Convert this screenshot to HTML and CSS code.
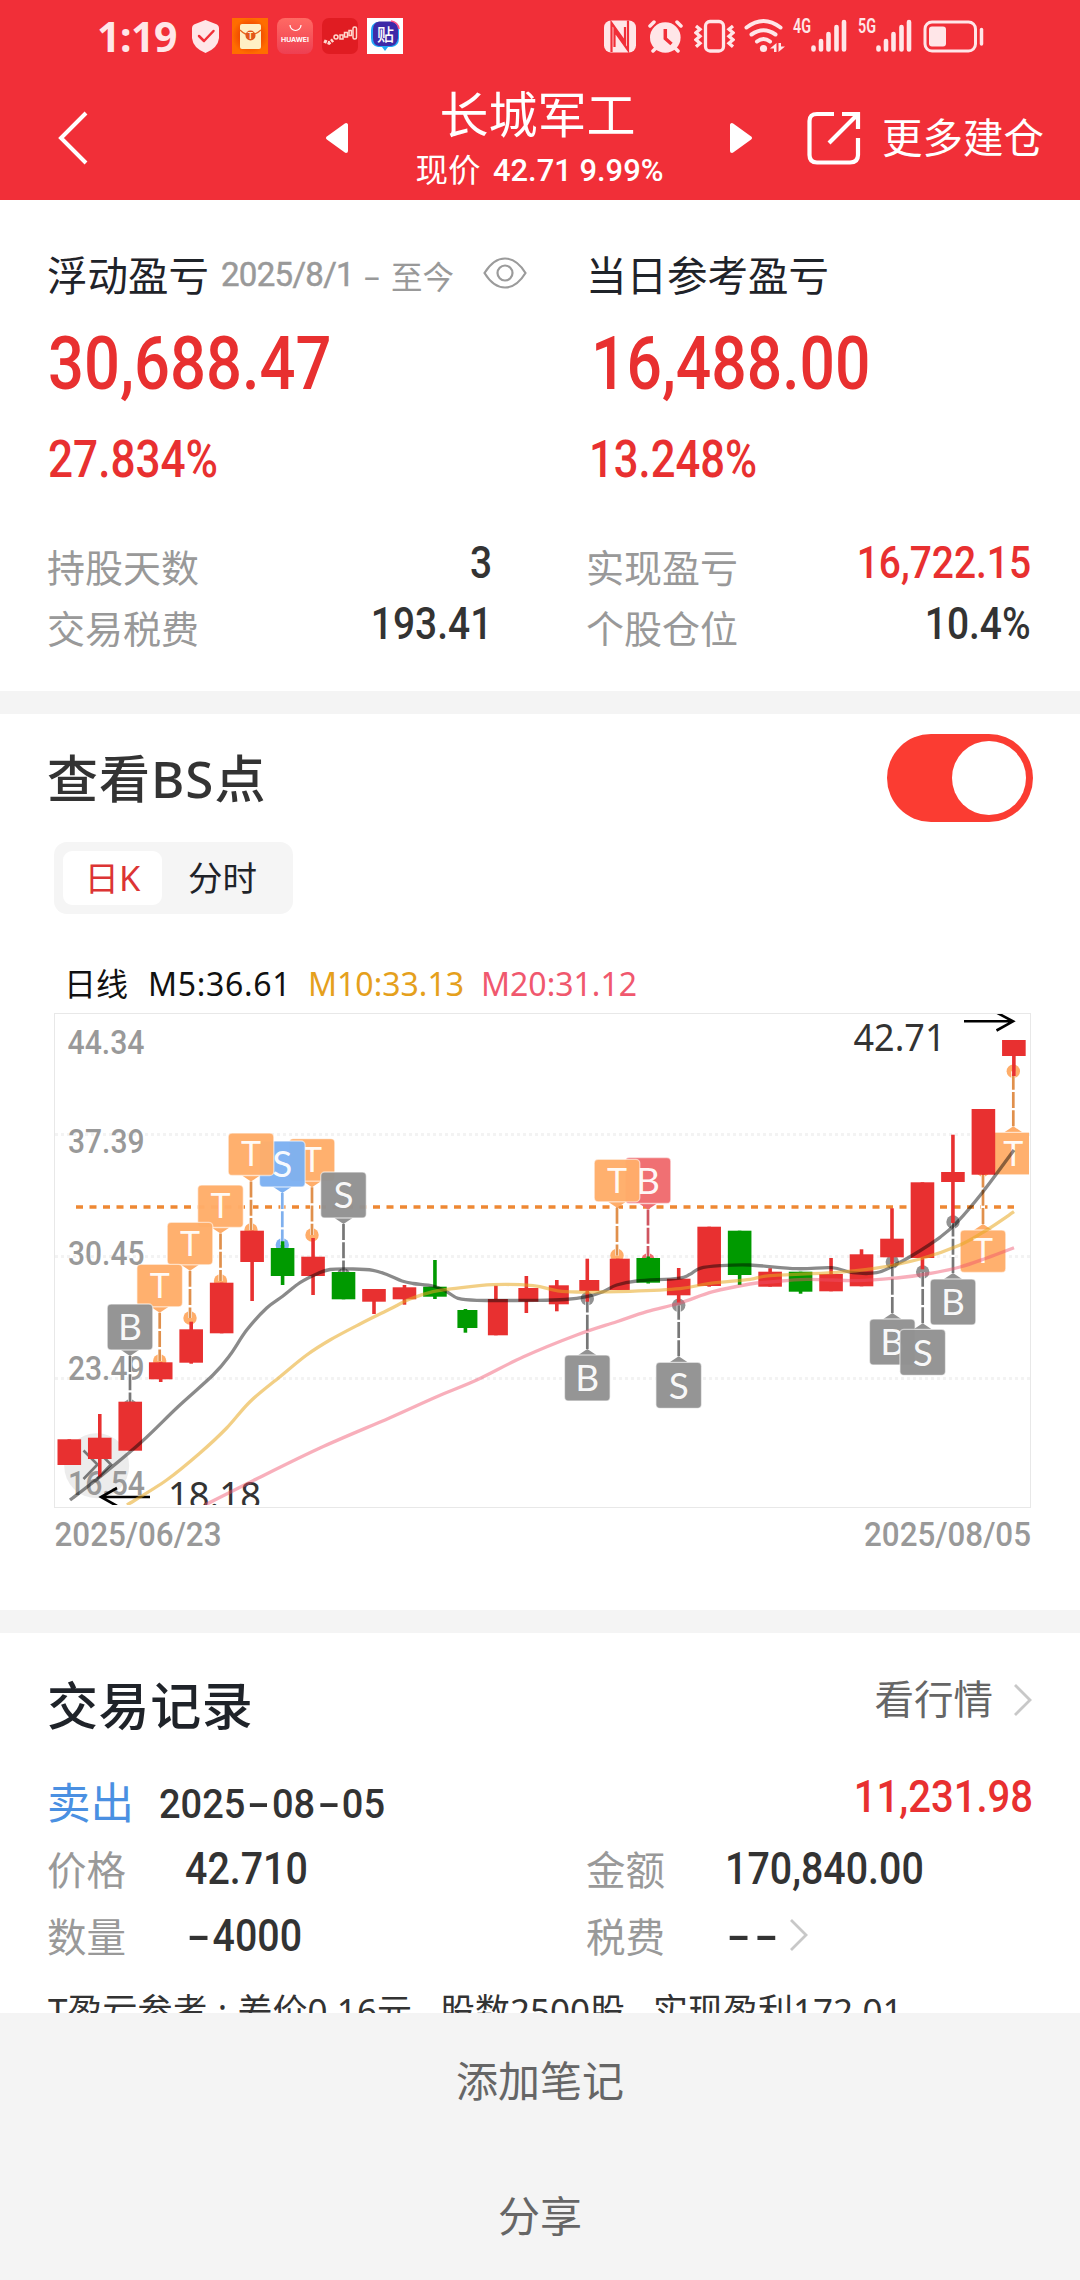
FILE: index.html
```html
<!DOCTYPE html>
<html lang="zh-CN">
<head>
<meta charset="utf-8">
<title>长城军工</title>
<link rel="stylesheet" href="styles.css">
</head>
<body>
<div class="app">
  <header class="top">
    <div class="status">
      <div class="status-left">
        <span class="clock">1:19</span>
        <svg class="i-shield" viewBox="192 19 27 35"><path fill="#ffe6e8" d="M205.500 20 L217 24.500 Q219 25.500 219 28 V38 Q218 48 205.500 53 Q193 48 192 38 V28 Q192 25.500 194 24.500Z"/><path fill="none" stroke="#f12f38" stroke-width="2.500" stroke-linecap="round" stroke-linejoin="round" d="M199 36 L204 41 L213.500 31"/></svg>
        <svg class="i-app" viewBox="0 0 36 36"><defs><radialGradient id="og"><stop offset=".55" stop-color="#f04a00"/><stop offset="1" stop-color="#ff6d00"/></radialGradient></defs><rect width="36" height="36" fill="url(#og)"/><rect x="8" y="6" width="21" height="25" rx="2" fill="#fff0c4"/><path d="M8 12 Q18 22 29 12" fill="none" stroke="#e8641e" stroke-width="1.200"/><circle cx="18.500" cy="17.500" r="5" fill="#e2571a"/><text x="18.500" y="20.500" text-anchor="middle" class="coin">T</text></svg>
        <svg class="i-app" viewBox="0 0 36 36"><defs><linearGradient id="hg" x2="0" y2="1"><stop stop-color="#ff6a64"/><stop offset="1" stop-color="#ee3f52"/></linearGradient></defs><rect width="36" height="36" rx="8" fill="url(#hg)"/><path d="M13 7 A5.500 5.500 0 0 0 24 7" fill="none" stroke="#fff" stroke-width="1.200"/><text x="18" y="23.500" text-anchor="middle" textLength="28" lengthAdjust="spacingAndGlyphs" class="huawei">HUAWEI</text></svg>
        <svg class="i-app" viewBox="0 0 36 36"><rect width="36" height="36" rx="7" fill="#e01c22"/><path d="M2 23 L7 25 L11 22" fill="none" stroke="#ffd9cf" stroke-width="3.500" stroke-dasharray="3 1"/><g fill="#e01c22" stroke="#ffd9cf" stroke-width="1.500"><circle cx="14" cy="19" r="2"/><rect x="18" y="17" width="3" height="4"/><rect x="22.500" y="14.500" width="3" height="4.500"/><rect x="27" y="12.500" width="2.500" height="5"/><rect x="31" y="9" width="3.500" height="12" rx="1.500"/></g></svg>
        <svg class="i-app" viewBox="0 0 36 36"><rect width="36" height="36" fill="#fff"/><path d="M10 4 H25 Q32 5 32 12 V20 Q32 28 25 29 H21 L18 33 L15 29 H11 Q4 28 4 20 V12 Q4 6 10 4Z" fill="#22a7f5"/><path d="M12 3.500 H25 Q31 5 31 12 V20 Q30 27 24 28 H12 Q6 27 6 20 V11 Q6 5 12 3.500Z" fill="#3d2aa8"/><path d="M24 3 Q31 4 32 11" stroke="#ff4f87" stroke-width="1.500" fill="none"/><text x="18.500" y="22.500" text-anchor="middle" class="tie">贴</text></svg>
      </div>
      <div class="status-right">
        <svg class="i-nfc" viewBox="604 18 32 36"><rect x="604" y="20.500" width="32" height="32" rx="7" fill="#ffe6e8"/><path fill="none" stroke="#f12f38" stroke-width="2.200" d="M611.500 52 V23 L625 42 V27 M628 20.500 V50 L614.500 31 V47"/></svg>
        <svg class="i-alarm" viewBox="648 18 35 36"><circle cx="665.300" cy="37.500" r="15.300" fill="#ffe6e8"/><g stroke="#ffe6e8" stroke-width="3.500" stroke-linecap="round"><path d="M650 26 L654 22 M681 26 L677 22 M653 51 L656 48 M678 51 L675 48"/></g><path d="M665.300 29 V38.500 L671.500 44" fill="none" stroke="#f12f38" stroke-width="3.500"/></svg>
        <svg class="i-vib" viewBox="694 18 41 36"><g fill="none" stroke="#ffe6e8" stroke-width="3.300"><rect x="705.500" y="21.500" width="18" height="29.500" rx="4.500"/><path d="M696 26 l4 3.300 l-4 3.500 l4 3.500 l-4 3.500 l4 3.500 l-4 3.500 M733 26 l-4 3.300 l4 3.500 l-4 3.500 l4 3.500 l-4 3.500 l4 3.500"/></g></svg>
        <svg class="i-wifi" viewBox="744 18 41 36"><g fill="none" stroke="#ffe6e8" stroke-width="4" stroke-linecap="round"><path d="M746.500 27.500 Q763.500 14.500 780.500 27.500 M751.500 34.500 Q763.500 26 775.500 34.500 M757 41.500 Q763.500 36.500 770 41.500"/></g><circle cx="763.500" cy="48.500" r="3.600" fill="#ffe6e8"/><path fill="#ffe6e8" d="M770 48.500 L776.500 43 V52 H774 V48.500Z M785 46.500 L778.500 52 V43 H781 V46.500Z"/></svg>
        <svg class="i-sig" viewBox="793 18 53 36"><text x="793" y="33" textLength="18" lengthAdjust="spacingAndGlyphs" class="gen">4G</text><path stroke="#ffe6e8" stroke-width="4.600" stroke-linecap="round" d="M813.500 47.500 V49.500 M821 41 V49.500 M828.500 34 V49.500 M836.500 27 V49.500 M844 22 V49.500"/></svg>
        <svg class="i-sig" viewBox="793 18 53 36"><text x="793" y="33" textLength="18" lengthAdjust="spacingAndGlyphs" class="gen">5G</text><path stroke="#ffe6e8" stroke-width="4.600" stroke-linecap="round" d="M813.500 47.500 V49.500 M821 41 V49.500 M828.500 34 V49.500 M836.500 27 V49.500 M844 22 V49.500"/></svg>
        <svg class="i-bat" viewBox="923 18 61 36"><rect x="925" y="22" width="50.500" height="29" rx="7" fill="none" stroke="#ffe6e8" stroke-width="3"/><rect x="929" y="26.500" width="17" height="20" rx="3" fill="#ffe6e8"/><path d="M981.500 29.500 V44" stroke="#ffe6e8" stroke-width="3.500" stroke-linecap="round"/></svg>
      </div>
    </div>
    <div class="nav">
      <svg class="back" viewBox="0 0 34 56"><path d="M30 3 L5 28 L30 53" fill="none" stroke="#fff" stroke-width="4"/></svg>
      <svg class="prev" viewBox="0 0 24 32"><path d="M21 3 V29 L3 16Z" fill="#fff" stroke="#fff" stroke-width="4" stroke-linejoin="round"/></svg>
      <div class="stock">
        <div class="stock-name">长城军工</div>
        <div class="stock-price"><span>现价</span><span class="num price-num">42.71 9.99%</span></div>
      </div>
      <svg class="next" viewBox="0 0 24 32"><path d="M3 3 V29 L21 16Z" fill="#fff" stroke="#fff" stroke-width="4" stroke-linejoin="round"/></svg>
      <svg class="share" viewBox="0 0 54 54"><g fill="none" stroke="#fff" stroke-width="4.200"><path d="M27 3 H10 Q2.500 3 2.500 10 V44 Q2.500 51.500 10 51.500 H43 Q51 51.500 51 44 V27"/><path d="M35 3 H51 V18 M51 3 L22 32"/></g></svg>
      <span class="more">更多建仓</span>
    </div>
  </header>

  <section class="summary">
    <div class="col">
      <div class="head"><span class="head-title">浮动盈亏</span><span class="period"><span class="num">2025/8/1</span><i class="hy">-</i>至今</span>
        <svg class="eye" viewBox="0 0 44 32"><g fill="none" stroke="#9b9b9b" stroke-width="2.200"><path d="M1.500 16 C8 5.500 15 1.500 22 1.500 S36 5.500 42.500 16 C36 26.500 29 30.500 22 30.500 S8 26.500 1.500 16Z"/><circle cx="22" cy="16" r="7.500"/></g></svg>
      </div>
      <div class="big num">30,688.47</div>
      <div class="pct num">27.834%</div>
      <div class="kv"><span>持股天数</span><b class="num">3</b></div>
      <div class="kv"><span>交易税费</span><b class="num">193.41</b></div>
    </div>
    <div class="col today">
      <div class="head"><span class="head-title">当日参考盈亏</span></div>
      <div class="big num">16,488.00</div>
      <div class="pct num">13.248%</div>
      <div class="kv"><span>实现盈亏</span><b class="num red">16,722.15</b></div>
      <div class="kv"><span>个股仓位</span><b class="num">10.4%</b></div>
    </div>
  </section>

  <section class="bs">
    <div class="bs-head"><h2>查看BS点</h2><div class="toggle"><i></i></div></div>
    <div class="tabs"><span class="tab on">日K</span><span class="tab">分时</span></div>
    <div class="legend"><span class="l0">日线</span><span class="l5">M5:36.61</span><span class="l10">M10:33.13</span><span class="l20">M20:31.12</span></div>
    <svg id="chart" class="chart" viewBox="40 1004 1000 560"></svg>
  </section>

  <section class="records">
    <div class="rec-head"><h2>交易记录</h2><span class="quote">看行情</span><svg class="chev" viewBox="0 0 20 34"><path d="M2 2 L17 17 L2 32" fill="none" stroke="#c8c8c8" stroke-width="2.800"/></svg></div>
    <div class="trade"><span class="side">卖出</span><span class="num date">2025<i class="hy">-</i>08<i class="hy">-</i>05</span><b class="num red gain">11,231.98</b></div>
    <div class="pair"><span>价格</span><b class="num">42.710</b><span>金额</span><b class="num">170,840.00</b></div>
    <div class="pair"><span>数量</span><b class="num"><i class="hy">-</i>4000</b><span>税费</span><b class="num dd"><i class="hy">-</i><i class="hy">-</i></b><svg class="chev" viewBox="0 0 20 34"><path d="M2 2 L17 17 L2 32" fill="none" stroke="#c8c8c8" stroke-width="2.800"/></svg></div>
    <div class="note">T盈亏参考<span class="colon">:</span>差价0.16元<span class="sp"></span>股数2500股<span class="sp"></span>实现盈利172.01</div>
  </section>

  <footer class="actions"><div>添加笔记</div><div>分享</div></footer>
</div>
<script src="chart.js"></script>
</body>
</html>
```
FILE: styles.css
```css
* { box-sizing: border-box; }
body {
  margin: 0;
  background: #fff;
  color: #333;
  font-family: "Noto Sans", "Noto Sans CJK SC", sans-serif;
}
h2 { margin: 0; font-weight: 400; }
svg { display: block; flex: none; }
span, b { white-space: nowrap; }
.app { width: 1080px; height: 2280px; overflow: hidden; display: flex; flex-direction: column; }
.num { font-family: Roboto, sans-serif; font-weight: 500; display: inline-block; transform: scaleX(.88); transform-origin: left center; }
.red, .big, .pct { color: #e83030; }
.hy { font-style: normal; display: inline-block; transform: scaleX(1.75); width: .7em; text-align: center; }

/* header */
.top { height: 200px; background: #f12f38; color: #fff; flex: none; }
.status { height: 72px; display: flex; justify-content: space-between; padding: 0 96px 0 97px; align-items: center; }
.status-left, .status-right { display: flex; align-items: center; height: 36px; }
.clock { font: 700 41px/36px "Noto Sans", sans-serif; color: #ffe6e8; width: 95px; letter-spacing: -.5px; }
.i-shield { width: 27px; height: 35px; margin-right: 13px; }
.i-app { width: 36px; height: 36px; margin-right: 9px; }
.coin { font: 700 8.500px Roboto, sans-serif; fill: #fff0c4; }
.huawei { font: 700 6.500px Inter, sans-serif; fill: #fff; }
.tie { font: 500 17px "Noto Sans CJK SC", sans-serif; fill: #fff; }
.i-nfc { width: 32px; height: 36px; margin-right: 12px; }
.i-alarm { width: 35px; height: 36px; margin-right: 11px; }
.i-vib { width: 41px; height: 36px; margin-right: 9px; }
.i-wifi { width: 41px; height: 36px; margin-right: 8px; }
.i-sig { width: 53px; height: 36px; margin-right: 12px; overflow: visible; }
.i-bat { width: 61px; height: 36px; }
.gen { font: 600 20px Roboto, sans-serif; fill: #ffe6e8; }
.nav { height: 128px; display: flex; padding-left: 56px; align-items: flex-start; }
.back { width: 34px; height: 56px; margin-top: 38px; }
.prev { width: 24px; height: 32px; margin: 50px 0 0 235px; }
.stock { width: 376px; text-align: center; display: flex; flex-direction: column; align-items: center; }
.stock-name { font-size: 49px; line-height: 56px; margin-top: 14px; padding-left: 1px; }
.stock-price { font-size: 32.500px; line-height: 40px; width: 247px; display: flex; margin: 8px 0 0 4px; }
.price-num { font-size: 32px; margin-left: 12px; transform: scaleX(.965); }
.next { width: 24px; height: 32px; margin: 50px 0 0 4px; }
.share { width: 54px; height: 54px; margin: 39px 0 0 54px; }
.more { font-size: 40.500px; line-height: 50px; margin: 41px 0 0 21px; }

/* profit summary */
.summary { height: 491px; flex: none; padding: 45px 49px 0 48px; display: grid; grid-template-columns: 444px 444px; column-gap: 95px; }
.head { display: flex; align-items: center; height: 56px; }
.head-title { font-size: 40.500px; color: #1f2329; margin-left: -1px; }
.period { font-size: 31.500px; color: #999; margin: 3px 0 0 12px; display: flex; flex: none; align-items: center; width: 262px; }
.period .num { font-size: 33px; font-weight: 400; transform: none; -webkit-text-stroke: .5px #999; letter-spacing: -.7px; width: 134px; }
.period .hy { width: 30px; margin: 0 4px 0 2px; }
.eye { width: 44px; height: 32px; }
.big { font-size: 74px; line-height: 80px; margin-top: 23px; transform: scaleX(.855); }
.pct { font-size: 51px; line-height: 60px; margin: 26px 0 42px; transform: scaleX(.865); }
.big, .pct { display: block; }
.today .big { margin-left: 4px; transform: scaleX(.843); }
.today .pct { margin-left: 2px; transform: scaleX(.855); }
.kv { height: 61px; display: flex; justify-content: space-between; align-items: center; font-size: 38px; color: #999; }
.kv span { line-height: 56px; margin: 8px 0 0 -1px; }
.kv b { font-size: 44px; color: #333; transform-origin: right center; transform: scaleX(.885); }
.kv b.red { color: #e83030; }

/* chart card */
.bs { height: 919px; flex: none; border-top: 23px solid #f4f4f4; padding-top: 20px; }
.bs-head { display: flex; justify-content: space-between; padding: 0 47px 0 48px; height: 88px; align-items: center; }
.bs h2 { font-size: 51px; line-height: 86px; color: #333; font-weight: 500; letter-spacing: 1px; margin-left: -1px; }
.toggle { width: 146px; height: 88px; border-radius: 44px; background: #fb3c32; padding: 7px; display: flex; justify-content: flex-end; }
.toggle i { width: 74px; height: 74px; border-radius: 50%; background: #fff; }
.tabs { width: 239px; height: 72px; margin: 20px 0 0 54px; padding: 9px; background: #f5f5f5; border-radius: 13px; display: flex; }
.tab { width: 121px; height: 54px; line-height: 53px; text-align: center; font-size: 34.500px; color: #1f2329; border-radius: 9px; }
.tab.on { width: 99px; background: #fff; color: #dc3434; }
.legend { height: 44px; margin: 48px 0 -2px 64px; display: flex; align-items: center; font-size: 32px; line-height: 44px; color: #111; }
.l0 { width: 84px; }
.l5 { width: 160px; letter-spacing: .7px; }
.l10 { width: 173px; color: #e5a01c; }
.l20 { color: #f0586e; }
.chart { width: 1000px; height: 560px; margin-left: 40px; }
.axis { font: 500 33px Roboto, sans-serif; fill: #999; }
.peak { font: 400 39px "Noto Sans", sans-serif; fill: #333; }
.mark { font-family: Lato, sans-serif; fill: #fff; fill-opacity: .95; }

/* trade records */
.records { height: 403px; flex: none; overflow: hidden; border-top: 23px solid #f4f4f4; padding: 34px 47px 0 48px; }
.rec-head { display: flex; height: 76px; align-items: center; }
.rec-head h2 { font-size: 51px; line-height: 76px; color: #1f2329; font-weight: 500; flex: 1; letter-spacing: .6px; margin-left: -1px; }
.quote { font-size: 39.500px; color: #666; line-height: 60px; margin: -12px 20px 0 0; }
.chev { width: 20px; height: 34px; }
.rec-head .chev { margin-top: -10px; }
.trade { display: flex; align-items: center; height: 68px; margin-top: 23px; }
.side { font-size: 43.500px; color: #4a90e2; width: 112px; margin-left: -1px; }
.date { font-size: 41px; color: #333; margin-top: 7px; transform: scaleX(.927); }
.gain { font-size: 44px; margin: -6px 0 0 auto; transform: scaleX(.91); transform-origin: right center; }
.pair { display: flex; align-items: center; height: 67px; font-size: 39.500px; color: #999; }
.pair b { font-size: 44px; color: #333; width: 401px; transform: scaleX(.895); margin-top: 3px; }
.pair span { width: 137px; margin-left: -1px; margin-right: 1px; }
.pair span + b + span { width: 139px; margin-left: 0; margin-right: 0; }
.pair span + b + span + b { width: auto; }
.pair .dd { margin-right: 2px; }
.note { font-size: 35px; line-height: 50px; margin-top: 18px; color: #333; white-space: nowrap; }
.colon { display: inline-block; width: 30px; text-align: center; }
.sp { display: inline-block; width: 28px; }

/* bottom actions */
.actions { flex: 1; background: #f4f4f4; text-align: center; font-size: 42px; line-height: 135px; color: #666; }
```
FILE: chart.js
```js
const RED = '#e83030', GREEN = '#009a00';
const X0 = 69.3, STEP = 30.47;
const cx = i => X0 + STEP * i;

// [high, bodyTop, bodyBottom, low, down?]
const candles = [
  [1439.3, 1439.3, 1465, 1465], [1414, 1437.7, 1459, 1476.7], [1401.7, 1401.7, 1450.7, 1450.7],
  [1362.3, 1362.3, 1379.3, 1382], [1321.7, 1329.3, 1362.7, 1363.7], [1282.7, 1282.7, 1333.3, 1333.3],
  [1230.7, 1230.7, 1262, 1301], [1241.3, 1248, 1276, 1285, 1], [1238, 1256.7, 1276, 1295],
  [1272, 1272, 1299.3, 1299.3, 1], [1289, 1289, 1301.7, 1314], [1285, 1287.3, 1299.3, 1304.7],
  [1260, 1286.7, 1296.7, 1299, 1], [1309, 1310, 1328, 1332.7, 1], [1285.7, 1299, 1335.3, 1335.3],
  [1276, 1288, 1301.7, 1313], [1280, 1285.3, 1304.3, 1311.3], [1258.7, 1280, 1291, 1301.7],
  [1258.7, 1258.7, 1290, 1290], [1256.5, 1258, 1282.7, 1283.5, 1], [1268, 1278.7, 1295.3, 1302.7],
  [1226.7, 1226.7, 1286, 1286.7], [1230.7, 1230.7, 1275, 1285, 1], [1268.3, 1271.7, 1286.7, 1286.7],
  [1271.7, 1271.7, 1291.7, 1293.7, 1], [1258, 1274, 1291.3, 1291.3], [1249.3, 1254.3, 1286.3, 1286.3],
  [1208.3, 1238.7, 1257.3, 1266], [1182.3, 1182.3, 1258, 1269.3], [1134.7, 1172, 1182, 1223],
  [1109, 1109, 1174.7, 1174.7], [1040, 1040, 1056, 1076]
];

const averages = [
  ['#000', .46, [70,1500,100,1476.7,141.7,1441.7,178,1406.7,213,1375,230,1355,246.7,1330,266.7,1308,283,1296,300,1282.7,316.7,1274,330,1269.5,353,1269,373,1270.3,388,1275,402,1281,413,1283.5,433,1286,446.7,1291.7,458,1298.3,476.7,1300.3,536.7,1300.3,565,1299.5,586.7,1296.7,603,1291.7,616.7,1285,636.7,1281,678,1278.3,690,1274.3,700,1268.3,720,1265.7,750,1265,796.7,1268.7,831.7,1267.7,853,1272.7,876.7,1272.7,893,1266,913,1255,940,1237.3,956.7,1222.7,983,1191.7,1014,1150]],
  ['#e8a820', .55, [127,1505,166.7,1480,200,1453,226.7,1428,250,1401.7,280,1376.7,306.7,1355,330,1340,360,1324,390,1309,410,1299,433,1291.7,453,1288.7,493,1284.7,533,1285.7,556.7,1290.7,576.7,1292,630,1291.3,680,1288.7,710,1283.3,750,1279.3,770,1275.7,833,1272.7,873,1268.7,920,1259,960,1245,986.7,1230,1014,1211.7]],
  ['#f0506a', .46, [205,1505,253,1480.7,320,1448,390,1417.7,436.7,1396.7,476.7,1380,523,1357,576.7,1335,616.7,1321.7,646.7,1311.7,680,1303,713,1291.7,750,1284,770,1282,806.7,1279.3,856.7,1280.7,896.7,1278,926.7,1274,960,1267,986.7,1258,1014,1247.7]]
];

// [letter, box colour, stem colour, stem x, box top, dot y], in paint order
const O = '#ffad69', G = '#929292', B = '#7db1f2', R = '#ef6b6e';
const OS = '#e0904c', GS = '#777', BS = '#7fb0ee', RS = '#cf5560';
const markers = [
  ['T', O, OS, 220.5, 1185, 1281], ['T', O, OS, 190, 1222.3, 1318], ['T', O, OS, 159.7, 1264.3, 1361],
  ['B', G, GS, 130, 1304, 1406],
  ['T', O, OS, 312, 1138.7, 1235], ['S', B, BS, 282.3, 1141, 1245], ['T', O, OS, 251, 1133, 1230],
  ['S', G, GS, 343.5, 1172, 1275],
  ['B', R, RS, 648, 1157.5, 1260], ['T', O, OS, 617, 1159.3, 1255.5],
  ['B', G, GS, 587.3, 1355, 1298.7], ['S', G, GS, 678.7, 1362.3, 1305.3],
  ['B', G, GS, 892.3, 1319, 1262], ['S', G, GS, 922.7, 1329.3, 1272], ['B', G, GS, 953, 1279, 1222],
  ['T', O, OS, 983, 1230, 1170], ['T', O, OS, 1013.3, 1132.3, 1071.3]
];

function marker([letter, fill, stem, x, top, dot]) {
  const h = letter === 'T' ? 42.5 : 46;
  const size = letter === 'T' ? 34 : 37;
  const down = dot > top;
  const edge = down ? top + h : top;
  const tip = down ? edge + 6 : edge - 6;
  return `<circle cx="${x}" cy="${dot}" r="6.700" fill="${fill}"/>
    <path d="M${x} ${tip}V${dot}" stroke="#fff" stroke-width="4"/>
    <path d="M${x} ${tip}V${dot}" stroke="${stem}" stroke-width="2.700" stroke-dasharray="16 2.300"/>
    <path d="M${x - 9} ${edge}L${x} ${tip}L${x + 9} ${edge}Z" fill="${fill}"/>
    <rect x="${x - 22.8}" y="${top}" width="45.600" height="${h}" rx="4" fill="${fill}" fill-opacity=".97" stroke="#fff" stroke-opacity=".55" stroke-width="1.300"/>
    <text class="mark" x="${x}" y="${top + h / 2 + size * .36}" text-anchor="middle" font-size="${size}">${letter}</text>`;
}

function smooth(p) {
  const n = p.length / 2, at = i => [p[2 * Math.max(0, Math.min(n - 1, i))], p[2 * Math.max(0, Math.min(n - 1, i)) + 1]];
  let d = `M${p[0]} ${p[1]}`;
  for (let i = 0; i < n - 1; i++) {
    const a = at(i - 1), b = at(i), c = at(i + 1), e = at(i + 2);
    d += `C${b[0] + (c[0] - a[0]) / 6} ${b[1] + (c[1] - a[1]) / 6} ${c[0] - (e[0] - b[0]) / 6} ${c[1] - (e[1] - b[1]) / 6} ${c[0]} ${c[1]}`;
  }
  return d;
}

const label = (x, y, w, t, c) => `<text class="${c}" x="${x}" y="${y}" textLength="${w}" lengthAdjust="spacingAndGlyphs">${t}</text>`;

let s = '<defs><clipPath id="plot"><rect x="55" y="1014" width="974" height="491"/></clipPath></defs>';
s += '<rect x="54.500" y="1013.500" width="976" height="494" fill="none" stroke="#e8e8e8"/>';
for (const y of [1134.5, 1256.5, 1378.5]) s += `<path d="M55 ${y}H1030" stroke="#f3f3f3" stroke-width="3" stroke-dasharray="3 3"/>`;
s += '<circle cx="96.700" cy="1465.700" r="32.500" fill="#ececec"/>';
s += '<path d="M83.500 1450.500L97.500 1464.500L83.500 1479M97 1450.500L111 1464.500L97 1479" fill="none" stroke="#777" stroke-width="2.600"/>';
s += label(67.5, 1053.5, 77, '44.34', 'axis') + label(68, 1152.7, 76.5, '37.39', 'axis') + label(68, 1264.7, 76.5, '30.45', 'axis')
  + label(68, 1380, 76.5, '23.49', 'axis') + label(68, 1495, 77, '16.54', 'axis');
s += label(54.5, 1546, 167, '2025/06/23', 'axis') + label(864, 1546, 167, '2025/08/05', 'axis');
s += '<g clip-path="url(#plot)">';
s += '<path d="M76 1207H1014" stroke="#ee8833" stroke-width="3.600" stroke-dasharray="7 6.500"/>';
s += markers.map(marker).join('');
candles.forEach(([hi, t, b, lo, down], i) => {
  const x = cx(i), c = down ? GREEN : RED, narrow = i >= 13 && i <= 18;
  s += `<path d="M${x} ${hi}V${lo}" stroke="${c}" stroke-width="3.600"/>`;
  s += `<rect x="${x - (narrow ? 8 : 11.8)}" y="${t}" width="${narrow ? 20 : 23.6}" height="${b - t}" fill="${c}"/>`;
});
s += label(168, 1508.5, 93, '18.18', 'peak') + label(853.5, 1050.7, 92, '42.71', 'peak');
s += '<path d="M150 1497H101M117 1488L101 1497L117 1506M964 1021.300H1013M996.500 1012.500L1013 1021.300L996.500 1030.500" fill="none" stroke="#000" stroke-width="2.600"/>';
for (const [c, o, p] of averages) s += `<path d="${smooth(p)}" fill="none" stroke="${c}" stroke-opacity="${o}" stroke-width="3.300"/>`;
s += '</g>';
document.getElementById('chart').innerHTML = s;
```
